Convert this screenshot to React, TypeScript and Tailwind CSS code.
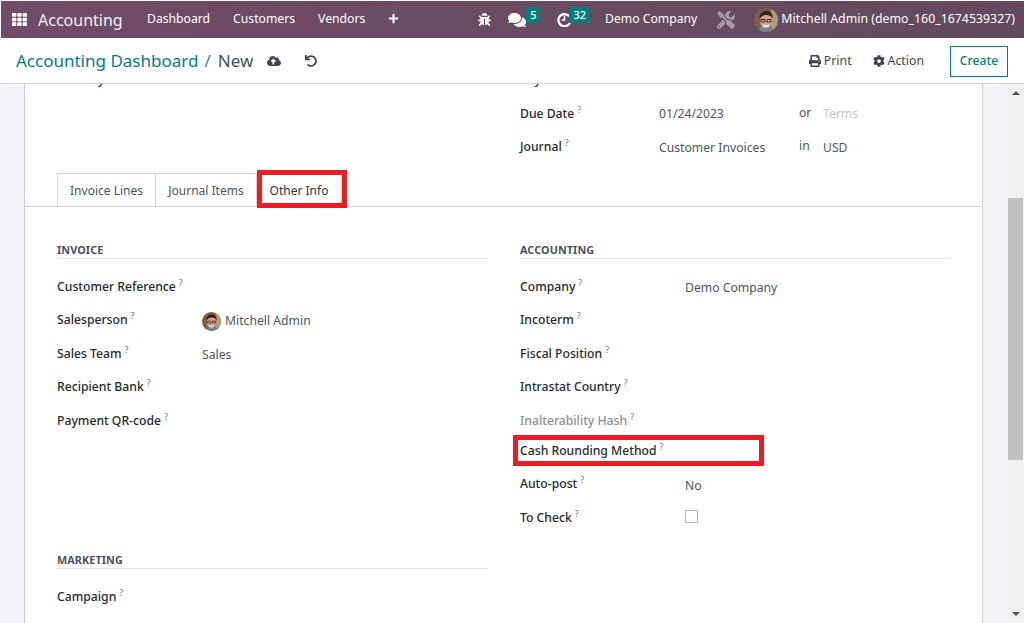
import { FaBug, FaCloudUploadAlt, FaCog, FaComments, FaPlus, FaPrint, FaTh, FaTools, FaUndo } from 'react-icons/fa'

const font = { fontFamily: '"Noto Sans", sans-serif' }

function Avatar({ size }: { size: string }) {
  return (
    <svg viewBox="0 0 24 24" className={size}>
      <clipPath id="round"><circle cx="12" cy="12" r="12" /></clipPath>
      <g clipPath="url(#round)">
        <rect width="24" height="24" fill="#7d5f45" />
        <rect x="17" width="7" height="24" fill="#b59a76" />
        <path d="M3 24c1-5 5-6 9-6s8 1 9 6z" fill="#6f8596" />
        <ellipse cx="12" cy="13" rx="6" ry="7.5" fill="#d3a088" />
        <path d="M5.500 11C5 5 9 3 13 3s6 3 5.500 8c-1-3-3-4-6-4s-5 1-7 4z" fill="#33241c" />
        <path d="M7 11.500h4v2.500H7zM13 11.500h4v2.500h-4z" fill="none" stroke="#2d2521" strokeWidth="0.9" />
        <path d="M9 17c2 1.500 4 1.500 6 0" stroke="#fff" strokeWidth="1.200" fill="none" />
      </g>
    </svg>
  )
}

function ClockIcon() {
  return (
    <svg viewBox="0 0 16 16" className="ml-[17px] w-[15px] h-[15px]" fill="none" stroke="currentColor">
      <path d="M13 4.500A6.500 6.500 0 1 0 14.500 8" strokeWidth="2.400" />
      <path d="M8 4v4.500H5" strokeWidth="1.500" />
    </svg>
  )
}

function Badge({ children, className }: { children: string; className: string }) {
  return <span className={`bg-[#017e84] text-white text-[11px] leading-[16px] h-[16px] px-[4px] font-medium -mt-[9px] relative ${className}`}>{children}</span>
}

function Label({ text, muted }: { text: string; muted?: boolean }) {
  return (
    <span className={`text-[12.2px] font-medium whitespace-nowrap ${muted ? 'text-[#8a8f98]' : 'text-[#262a33]'}`}>
      {text}
      <sup className="text-[9px] font-normal text-[#6b7280] ml-[3px] -top-[5px] relative align-baseline">?</sup>
    </span>
  )
}

function Row({ label, labelW, muted, children, h = 'h-[33.5px]' }: { label: string; labelW: string; muted?: boolean; children?: React.ReactNode; h?: string }) {
  return (
    <div className={`flex items-center ${h}`}>
      <div className={`${labelW} -mt-[3px]`}><Label text={label} muted={muted} /></div>
      <div className="text-[12.2px] text-[#4b5563] pt-[4px] flex items-center">{children}</div>
    </div>
  )
}

function GroupTitle({ text }: { text: string }) {
  return <div className="text-[10.8px] font-bold text-[#4a4f5e] uppercase border-b border-[#e2e4e8] h-[17px] leading-[15px] tracking-[0.1px]">{text}</div>
}

export default function App() {
  return (
    <div className="h-[623px] w-[1024px] overflow-hidden flex flex-col bg-white pt-px pl-px" style={font}>
      {/* Navbar */}
      <header className="h-[37px] shrink-0 bg-gradient-to-r from-[#714b67] to-[#624a5c] flex items-center text-white text-[12.2px]">
        <FaTh className="ml-[11px] w-[15px] h-[15px]" />
        <span className="ml-[11px] text-[16px] text-[#f3eef2] w-[109px]">Accounting</span>
        <nav className="flex items-center gap-[23px]">
          <span>Dashboard</span>
          <span>Customers</span>
          <span>Vendors</span>
        </nav>
        <FaPlus className="ml-[23px] w-[11px] h-[11px] -mt-[2px]" />
        <div className="ml-auto flex items-center">
          <FaBug className="w-[13px] h-[13px]" />
          <FaComments className="ml-[17px] w-[18px] h-[18px]" />
          <Badge className="">5</Badge>
          <ClockIcon />
          <Badge className="-ml-[3px]">32</Badge>
          <span className="ml-[15px]">Demo Company</span>
          <FaTools className="ml-[20px] w-[18px] h-[18px] text-[#a89aa5]" />
          <Avatar size="ml-[19px] w-[24px] h-[24px]" />
          <span className="ml-[3px] mr-[9px] text-[12.35px]">Mitchell Admin (demo_160_1674539327)</span>
        </div>
      </header>

      {/* Control panel */}
      <div className="h-[46px] shrink-0 flex items-center border-b border-[#cfcfd4]">
        <span className="ml-[15px] text-[17px] text-[#017e84]">Accounting Dashboard</span>
        <span className="ml-[6px] text-[17px] text-[#6b7280]">/</span>
        <span className="ml-[7px] text-[17px] text-[#46505e]">New</span>
        <FaCloudUploadAlt className="ml-[14px] w-[14px] h-[14px] text-[#3f4450]" />
        <FaUndo className="ml-[24px] w-[12px] h-[12px] text-[#3f4450]" />
        <div className="ml-auto flex items-center text-[12.3px] text-[#3f4450] pt-[1px]">
          <FaPrint className="w-[12px] h-[12px]" />
          <span className="ml-[3px]">Print</span>
          <FaCog className="ml-[21px] w-[12px] h-[12px]" />
          <span className="ml-[3px]">Action</span>
          <button className="ml-[26px] mr-[16px] w-[58px] h-[31px] border border-[#017e84] text-[#017e84] text-[12.2px] font-medium">Create</button>
        </div>
      </div>

      {/* Form */}
      <div className="flex flex-1 min-h-0 -ml-px">
        <div className="w-[24px] bg-[#f4f5f9] shrink-0" />
        <main className="w-[959px] shrink-0 bg-white border-x border-[#c9cbd4] overflow-hidden">
          <div className="-mt-[21px] pl-[32px] flex">
            <div className="w-[463px]">
              <Row label="Delivery Address" labelW="w-[145px]" />
            </div>
            <div>
              <Row label="Payment Reference" labelW="w-[139px]" />
              <Row label="Due Date" labelW="w-[139px]">
                <span className="w-[140px] -mt-[2px]">01/24/2023</span>
                <span className="w-[24px] -mt-[4px]">or</span>
                <span className="text-[#c4c6d0] -mt-[2px]">Terms</span>
              </Row>
              <Row label="Journal" labelW="w-[139px]">
                <span className="w-[140px] -mt-[2px]">Customer Invoices</span>
                <span className="w-[24px] -mt-[5px]">in</span>
                <span className="-mt-[2px]">USD</span>
              </Row>
            </div>
          </div>

          {/* Tabs */}
          <div className="mt-[9px] h-[34px] border-b border-[#cfd0d8] pl-[32px] flex text-[12px] text-[#4b5563]">
            <div className="h-[34px] w-[99px] border border-[#cfd0d8] flex items-center justify-center pt-[3px]">Invoice Lines</div>
            <div className="h-[34px] w-[101px] border-y border-r border-[#cfd0d8] flex items-center justify-center pt-[3px]">Journal Items</div>
            <div className="relative h-[34px] w-[85px] bg-white border-r border-[#cfd0d8] flex items-center justify-center text-[#2f3542] pt-[3px]">
              Other Info
              <div className="absolute left-0 -top-[3px] w-[90px] h-[38px] border-[5px] border-[#ed1c24]" />
            </div>
          </div>

          <div className="pt-[35px] pl-[32px] flex">
            <div className="w-[431px] mr-[32px]">
              <GroupTitle text="Invoice" />
              <div className="mt-[11px]">
                <Row label="Customer Reference" labelW="w-[145px]" />
                <Row label="Salesperson" labelW="w-[145px]">
                  <Avatar size="w-[19px] h-[19px] mr-[4px]" />
                  <span className="-mt-[2px]">Mitchell Admin</span>
                </Row>
                <Row label="Sales Team" labelW="w-[145px]">Sales</Row>
                <Row label="Recipient Bank" labelW="w-[145px]" />
                <Row label="Payment QR-code" labelW="w-[145px]" />
              </div>
              <div className="mt-[115px]">
                <GroupTitle text="Marketing" />
              </div>
              <div className="mt-[11px]">
                <Row label="Campaign" labelW="w-[145px]" />
              </div>
            </div>
            <div className="w-[431px]">
              <GroupTitle text="Accounting" />
              <div className="mt-[11px]">
                <Row label="Company" labelW="w-[165px]">Demo Company</Row>
                <Row label="Incoterm" labelW="w-[165px]" />
                <Row label="Fiscal Position" labelW="w-[165px]" />
                <Row label="Intrastat Country" labelW="w-[165px]" />
                <Row label="Inalterability Hash" labelW="w-[165px]" muted />
                <div className="relative h-[30px]">
                  <Row label="Cash Rounding Method" labelW="w-[165px]" h="h-[27px]" />
                  <div className="absolute -left-[7px] -top-[2px] w-[251px] h-[31px] border-[5px] border-[#ed1c24]" />
                </div>
                <Row label="Auto-post" labelW="w-[165px]">No</Row>
                <Row label="To Check" labelW="w-[165px]">
                  <span className="w-[13px] h-[13px] border border-[#b5b5b5] -mt-[6px]" />
                </Row>
              </div>
            </div>
          </div>
        </main>
        <div className="w-[24px] bg-[#f4f5f9] shrink-0" />

        {/* Scrollbar */}
        <div className="w-[17px] shrink-0 bg-[#f1f1f1] flex flex-col items-center">
          <div className="mt-[7px] w-0 h-0 border-x-[4px] border-x-transparent border-b-[4px] border-b-[#505050]" />
          <div className="mt-[103px] w-[15px] h-[262px] bg-[#c1c1c1]" />
          <div className="mt-[152px] w-0 h-0 border-x-[4px] border-x-transparent border-t-[4px] border-t-[#505050]" />
        </div>
      </div>
    </div>
  )
}
